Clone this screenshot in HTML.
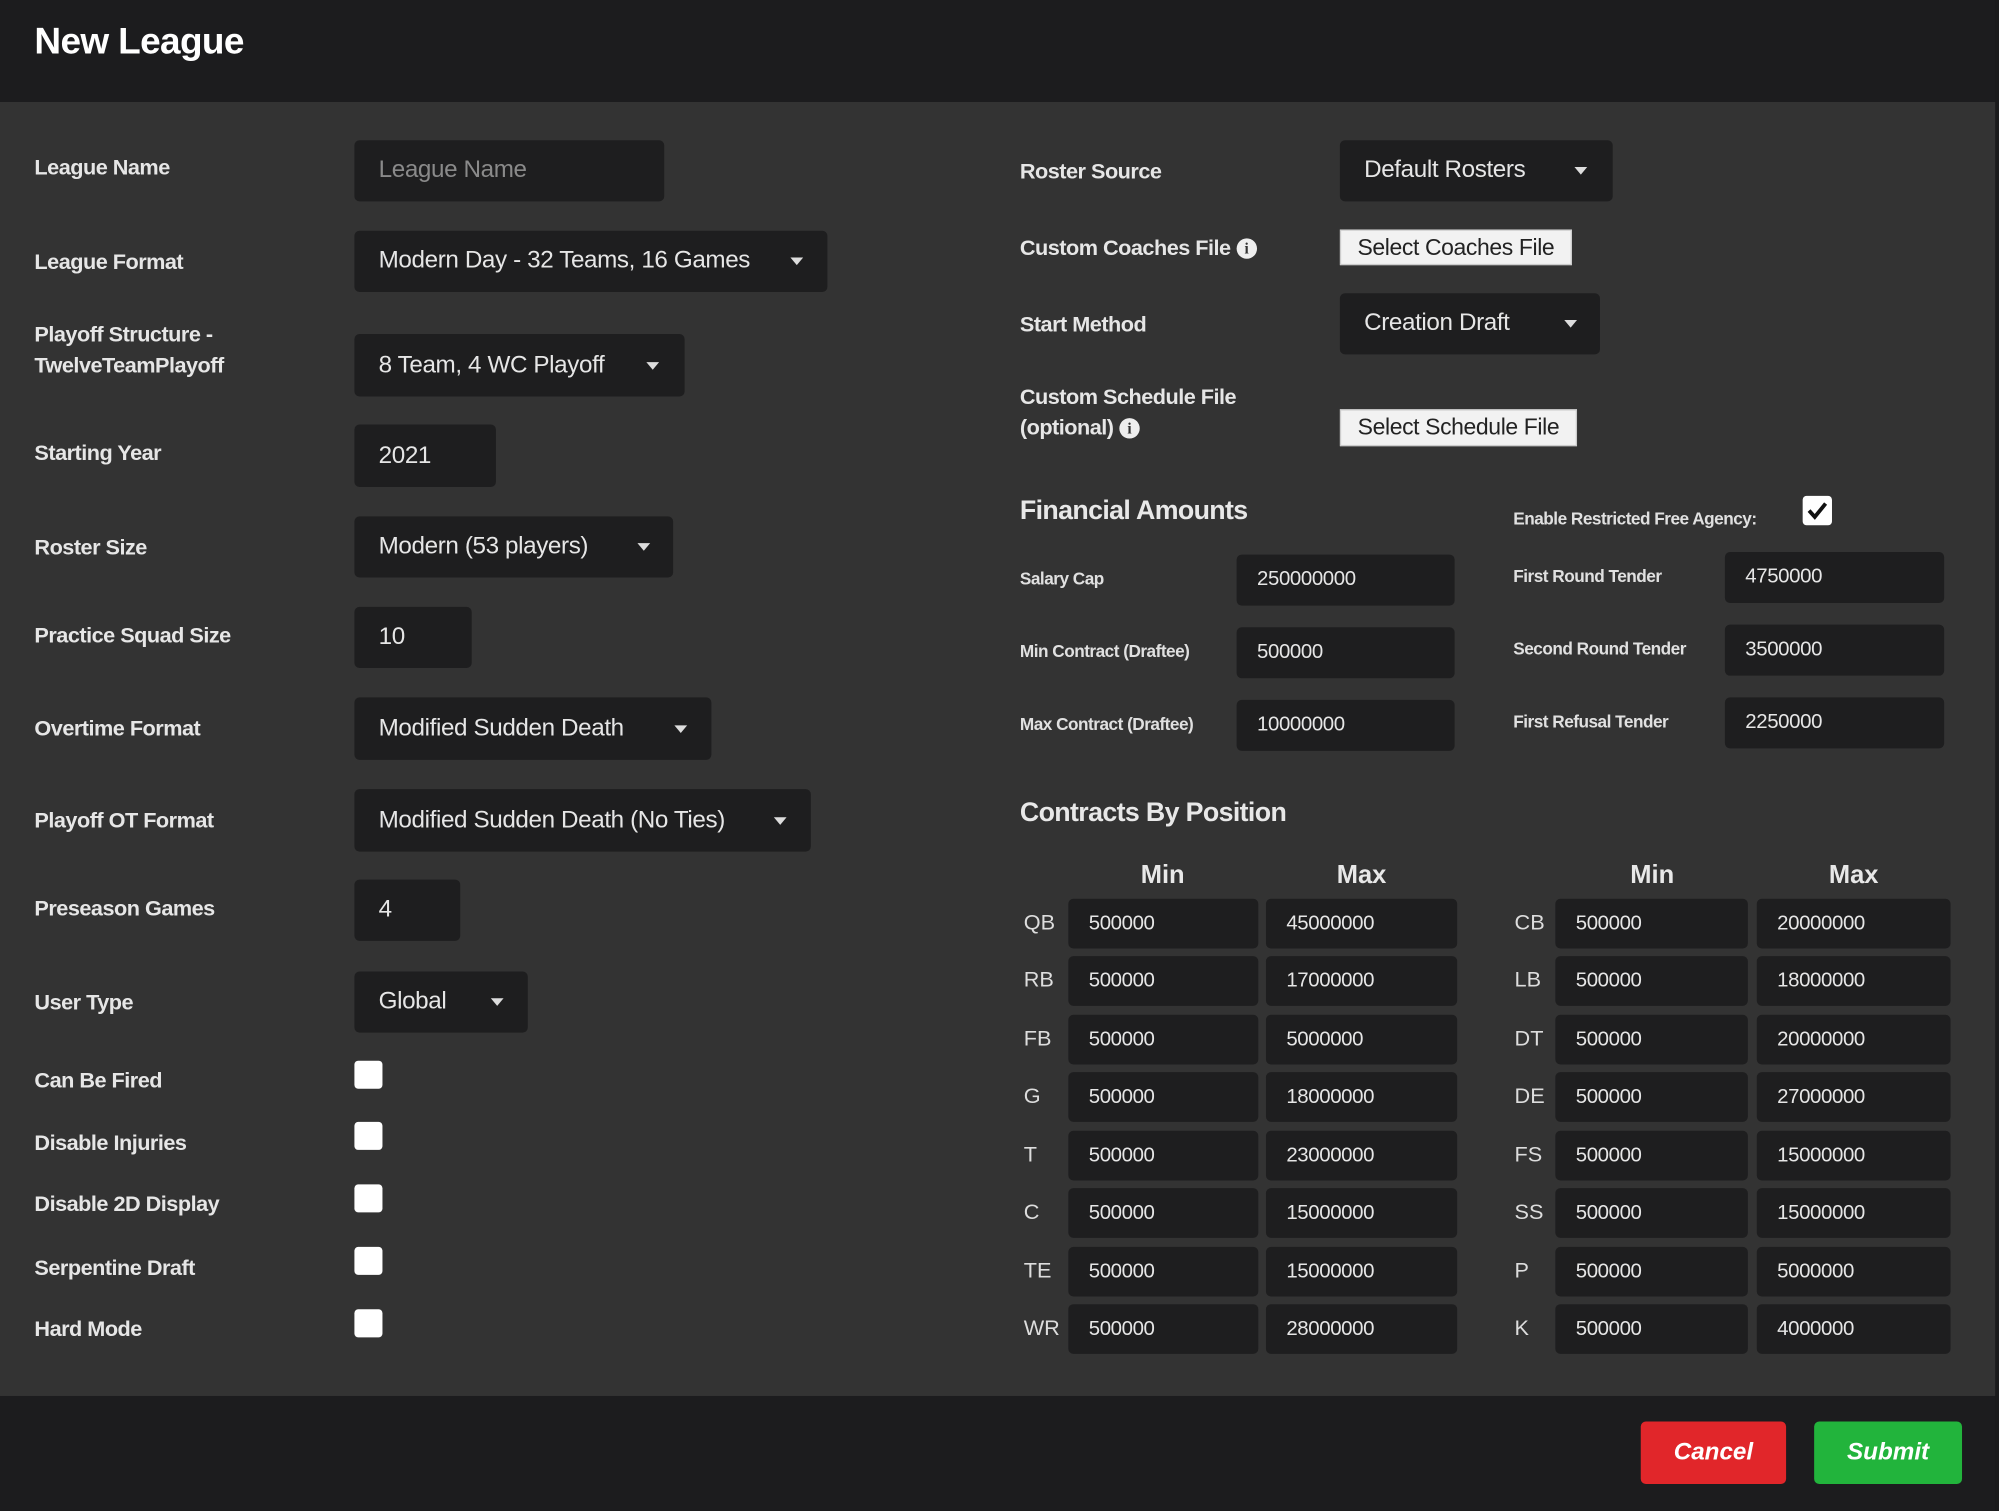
<!DOCTYPE html>
<html><head><meta charset="utf-8"><style>
html,body{margin:0;padding:0;background:#1b1b1c;width:1999px;height:1510px;overflow:hidden}
#w{position:absolute;left:0;top:0;width:1568px;height:1185px;transform:scale(1.27487);transform-origin:0 0;font-family:"Liberation Sans",sans-serif;color:#e8e8e8}
.hd{position:absolute;left:0;top:0;width:1565px;height:80px;background:#1c1c1e}
.bd{position:absolute;left:0;top:80px;width:1565px;height:1015px;background:#333333}
.ft{position:absolute;left:0;top:1095px;width:1565px;height:90px;background:#1c1c1e}
.a{position:absolute;white-space:nowrap}
.l{position:absolute;font-weight:bold;font-size:17px;letter-spacing:-0.4px;color:#e6e6e6;transform:translateY(-50%);white-space:nowrap}
.s{position:absolute;font-weight:bold;font-size:13.5px;letter-spacing:-0.4px;color:#e0e0e0;transform:translateY(-50%);white-space:nowrap}
.in{position:absolute;background:#1e1e1f;border-radius:4px;box-sizing:border-box;padding-left:19px;font-size:19px;color:#e6e6e6;display:flex;align-items:center;letter-spacing:-0.3px}
.sm{font-size:16px;padding-left:16px}
.ar{position:absolute;top:50%;margin-top:-3px;width:0;height:0;border-left:5px solid transparent;border-right:5px solid transparent;border-top:6px solid #ddd}
.cb{position:absolute;width:22px;height:22px;background:#fff;border-radius:3px}
.bt{position:absolute;background:#f2f2f2;border:1px solid #ccc;box-sizing:border-box;color:#222;font-size:18px;display:flex;align-items:center;justify-content:center;letter-spacing:-0.3px}
.i{display:inline-block;width:16px;height:16px;border-radius:50%;background:#eee;color:#333;font-size:12px;font-weight:bold;text-align:center;line-height:16px;vertical-align:1px;font-family:"Liberation Serif",serif}
.h{position:absolute;font-weight:bold;font-size:21px;letter-spacing:-0.5px;transform:translateY(-50%);white-space:nowrap}
.p{position:absolute;font-size:17px;color:#ddd;transform:translateY(-50%)}
.mh{position:absolute;font-weight:bold;font-size:20px;transform:translate(-50%,-50%)}
</style></head><body><div id="w">
<div class="hd"></div><div class="bd"></div><div class="ft"></div>
<div class="a" style="left:27px;top:17px;font-size:29px;font-weight:bold;color:#fff;letter-spacing:-0.5px">New League</div>

<div class="l" style="left:27px;top:132px">League Name</div>
<div class="in" style="left:278px;top:110px;width:243px;height:48px;color:#8a8a8a">League Name</div>
<div class="l" style="left:27px;top:206px">League Format</div>
<div class="in" style="left:278px;top:181px;width:371px;height:48px">Modern Day - 32 Teams, 16 Games<span class="ar" style="left:342px"></span></div>
<div class="l" style="left:27px;top:275px;line-height:24px">Playoff Structure -<br>TwelveTeamPlayoff</div>
<div class="in" style="left:278px;top:262px;width:259px;height:49px">8 Team, 4 WC Playoff<span class="ar" style="left:229px"></span></div>
<div class="l" style="left:27px;top:356px">Starting Year</div>
<div class="in" style="left:278px;top:333px;width:111px;height:49px">2021</div>
<div class="l" style="left:27px;top:430px">Roster Size</div>
<div class="in" style="left:278px;top:405px;width:250px;height:48px">Modern (53 players)<span class="ar" style="left:222px"></span></div>
<div class="l" style="left:27px;top:499px">Practice Squad Size</div>
<div class="in" style="left:278px;top:476px;width:92px;height:48px">10</div>
<div class="l" style="left:27px;top:572px">Overtime Format</div>
<div class="in" style="left:278px;top:547px;width:280px;height:49px">Modified Sudden Death<span class="ar" style="left:251px"></span></div>
<div class="l" style="left:27px;top:644px">Playoff OT Format</div>
<div class="in" style="left:278px;top:619px;width:358px;height:49px">Modified Sudden Death (No Ties)<span class="ar" style="left:329px"></span></div>
<div class="l" style="left:27px;top:713px">Preseason Games</div>
<div class="in" style="left:278px;top:690px;width:83px;height:48px">4</div>
<div class="l" style="left:27px;top:787px">User Type</div>
<div class="in" style="left:278px;top:762px;width:136px;height:48px">Global<span class="ar" style="left:107px"></span></div>
<div class="l" style="left:27px;top:848px">Can Be Fired</div><div class="cb" style="left:278px;top:832px"></div>
<div class="l" style="left:27px;top:897px">Disable Injuries</div><div class="cb" style="left:278px;top:880px"></div>
<div class="l" style="left:27px;top:945px">Disable 2D Display</div><div class="cb" style="left:278px;top:929px"></div>
<div class="l" style="left:27px;top:995px">Serpentine Draft</div><div class="cb" style="left:278px;top:978px"></div>
<div class="l" style="left:27px;top:1043px">Hard Mode</div><div class="cb" style="left:278px;top:1027px"></div>

<div class="l" style="left:800px;top:135px">Roster Source</div>
<div class="in" style="left:1051px;top:110px;width:214px;height:48px">Default Rosters<span class="ar" style="left:184px"></span></div>
<div class="l" style="left:800px;top:195px">Custom Coaches File <span class="i">i</span></div>
<div class="bt" style="left:1051px;top:180px;width:182px;height:28px">Select Coaches File</div>
<div class="l" style="left:800px;top:255px">Start Method</div>
<div class="in" style="left:1051px;top:230px;width:204px;height:48px">Creation Draft<span class="ar" style="left:176px"></span></div>
<div class="l" style="left:800px;top:324px;line-height:24px">Custom Schedule File<br>(optional) <span class="i">i</span></div>
<div class="bt" style="left:1051px;top:321px;width:186px;height:29px">Select Schedule File</div>

<div class="h" style="left:800px;top:401px">Financial Amounts</div>
<div class="s" style="left:1187px;top:407px">Enable Restricted Free Agency:</div>
<div class="cb" style="left:1414px;top:389px;width:23px;height:23px"><svg width="23" height="23" viewBox="0 0 23 23"><path d="M5 11.5l4.5 5L18 6" stroke="#111" stroke-width="3" fill="none"/></svg></div>

<div class="s" style="left:800px;top:454px">Salary Cap</div>
<div class="in sm" style="left:970px;top:435px;width:171px;height:40px">250000000</div>
<div class="s" style="left:800px;top:511px">Min Contract (Draftee)</div>
<div class="in sm" style="left:970px;top:492px;width:171px;height:40px">500000</div>
<div class="s" style="left:800px;top:568px">Max Contract (Draftee)</div>
<div class="in sm" style="left:970px;top:549px;width:171px;height:40px">10000000</div>
<div class="s" style="left:1187px;top:452px">First Round Tender</div>
<div class="in sm" style="left:1353px;top:433px;width:172px;height:40px">4750000</div>
<div class="s" style="left:1187px;top:509px">Second Round Tender</div>
<div class="in sm" style="left:1353px;top:490px;width:172px;height:40px">3500000</div>
<div class="s" style="left:1187px;top:566px">First Refusal Tender</div>
<div class="in sm" style="left:1353px;top:547px;width:172px;height:40px">2250000</div>

<div class="h" style="left:800px;top:638px">Contracts By Position</div>
<div class="mh" style="left:912px;top:687px">Min</div>
<div class="mh" style="left:1068px;top:687px">Max</div>
<div class="mh" style="left:1296px;top:687px">Min</div>
<div class="mh" style="left:1454px;top:687px">Max</div>

<div class="p" style="left:803px;top:724px">QB</div><div class="in sm" style="left:838px;top:705px;width:149px;height:39px">500000</div><div class="in sm" style="left:993px;top:705px;width:150px;height:39px">45000000</div>
<div class="p" style="left:1188px;top:724px">CB</div><div class="in sm" style="left:1220px;top:705px;width:151px;height:39px">500000</div><div class="in sm" style="left:1378px;top:705px;width:152px;height:39px">20000000</div>

<div class="p" style="left:803px;top:769px">RB</div><div class="in sm" style="left:838px;top:750px;width:149px;height:39px">500000</div><div class="in sm" style="left:993px;top:750px;width:150px;height:39px">17000000</div>
<div class="p" style="left:1188px;top:769px">LB</div><div class="in sm" style="left:1220px;top:750px;width:151px;height:39px">500000</div><div class="in sm" style="left:1378px;top:750px;width:152px;height:39px">18000000</div>

<div class="p" style="left:803px;top:815px">FB</div><div class="in sm" style="left:838px;top:796px;width:149px;height:39px">500000</div><div class="in sm" style="left:993px;top:796px;width:150px;height:39px">5000000</div>
<div class="p" style="left:1188px;top:815px">DT</div><div class="in sm" style="left:1220px;top:796px;width:151px;height:39px">500000</div><div class="in sm" style="left:1378px;top:796px;width:152px;height:39px">20000000</div>

<div class="p" style="left:803px;top:860px">G</div><div class="in sm" style="left:838px;top:841px;width:149px;height:39px">500000</div><div class="in sm" style="left:993px;top:841px;width:150px;height:39px">18000000</div>
<div class="p" style="left:1188px;top:860px">DE</div><div class="in sm" style="left:1220px;top:841px;width:151px;height:39px">500000</div><div class="in sm" style="left:1378px;top:841px;width:152px;height:39px">27000000</div>

<div class="p" style="left:803px;top:906px">T</div><div class="in sm" style="left:838px;top:887px;width:149px;height:39px">500000</div><div class="in sm" style="left:993px;top:887px;width:150px;height:39px">23000000</div>
<div class="p" style="left:1188px;top:906px">FS</div><div class="in sm" style="left:1220px;top:887px;width:151px;height:39px">500000</div><div class="in sm" style="left:1378px;top:887px;width:152px;height:39px">15000000</div>

<div class="p" style="left:803px;top:951px">C</div><div class="in sm" style="left:838px;top:932px;width:149px;height:39px">500000</div><div class="in sm" style="left:993px;top:932px;width:150px;height:39px">15000000</div>
<div class="p" style="left:1188px;top:951px">SS</div><div class="in sm" style="left:1220px;top:932px;width:151px;height:39px">500000</div><div class="in sm" style="left:1378px;top:932px;width:152px;height:39px">15000000</div>

<div class="p" style="left:803px;top:997px">TE</div><div class="in sm" style="left:838px;top:978px;width:149px;height:39px">500000</div><div class="in sm" style="left:993px;top:978px;width:150px;height:39px">15000000</div>
<div class="p" style="left:1188px;top:997px">P</div><div class="in sm" style="left:1220px;top:978px;width:151px;height:39px">500000</div><div class="in sm" style="left:1378px;top:978px;width:152px;height:39px">5000000</div>

<div class="p" style="left:803px;top:1042px">WR</div><div class="in sm" style="left:838px;top:1023px;width:149px;height:39px">500000</div><div class="in sm" style="left:993px;top:1023px;width:150px;height:39px">28000000</div>
<div class="p" style="left:1188px;top:1042px">K</div><div class="in sm" style="left:1220px;top:1023px;width:151px;height:39px">500000</div><div class="in sm" style="left:1378px;top:1023px;width:152px;height:39px">4000000</div>

<div class="a" style="left:1287px;top:1115px;width:114px;height:49px;background:#e1262a;border-radius:4px;display:flex;align-items:center;justify-content:center;font-weight:bold;font-style:italic;font-size:19px;color:#fff">Cancel</div>
<div class="a" style="left:1423px;top:1115px;width:116px;height:49px;background:#22b43c;border-radius:4px;display:flex;align-items:center;justify-content:center;font-weight:bold;font-style:italic;font-size:19px;color:#fff">Submit</div>
</div></body></html>
